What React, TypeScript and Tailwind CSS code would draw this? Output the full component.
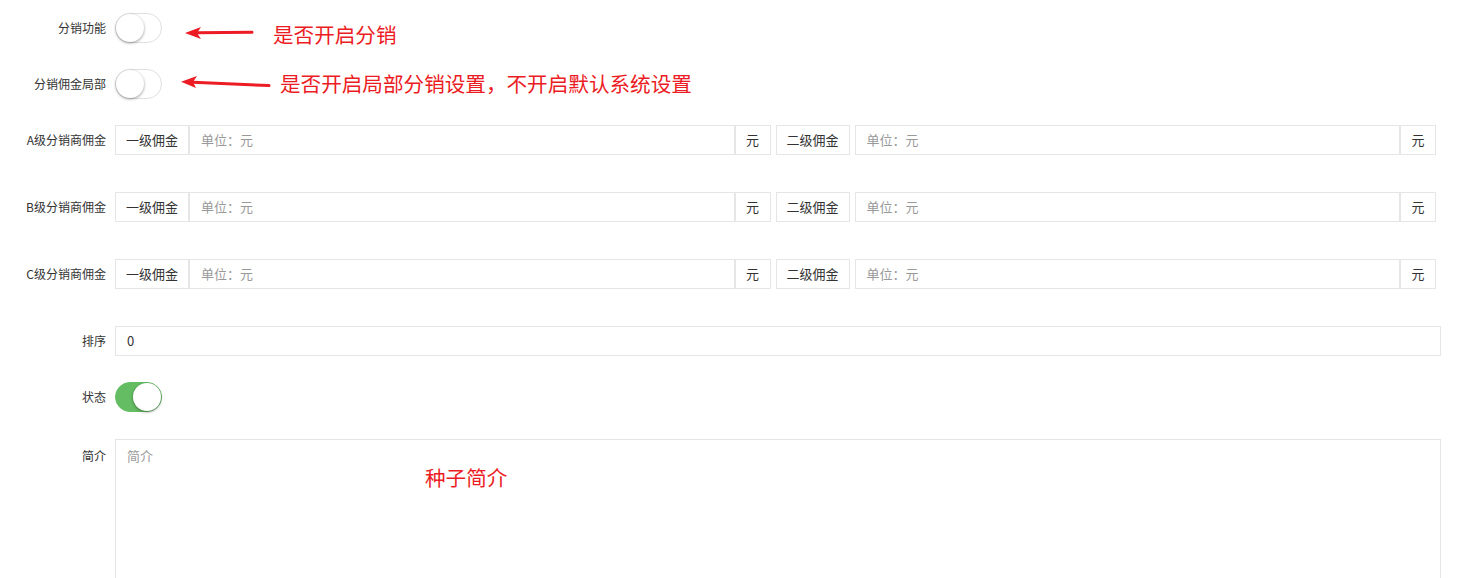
import type { ReactNode } from "react";

const FONT = "font-['Microsoft_YaHei','Noto_Sans_CJK_SC',sans-serif]";

const LEVELS = ["A", "B", "C"];

function Label({ children }: { children: ReactNode }) {
  return (
    <div className="w-[106px] shrink-0 text-right text-[12px] text-[#333]">
      {children}
    </div>
  );
}

function Switch({ on }: { on?: boolean }) {
  return (
    <div
      className={
        on
          ? "flex h-[30px] w-[47px] items-center justify-end rounded-full border border-[#64bd63] bg-[#64bd63]"
          : "flex h-[30px] w-[47px] items-center justify-start rounded-full border border-[#dfdfdf] bg-white"
      }
    >
      <div className="h-[28px] w-[28px] rounded-full bg-white shadow-[0_1px_3px_rgba(0,0,0,0.4)]" />
    </div>
  );
}

function Addon({ children, w }: { children: ReactNode; w: string }) {
  return (
    <div
      className={`${w} flex h-[30px] shrink-0 items-center justify-center border border-[#e6e6e6] bg-white text-[13px] text-[#333]`}
    >
      {children}
    </div>
  );
}

function Field({ placeholder, value }: { placeholder?: string; value?: string }) {
  return (
    <div className="flex h-[30px] min-w-0 flex-1 items-center border border-[#e6e6e6] bg-white px-[11px] text-[13px]">
      {value ? (
        <span className="text-[#333]">{value}</span>
      ) : (
        <span className="text-[#999]">{placeholder}</span>
      )}
    </div>
  );
}

function Arrow({ d, head }: { d: string; head: string }) {
  return (
    <>
      <path d={d} stroke="#ec1c24" strokeWidth="3" strokeLinecap="round" fill="none" />
      <path d={head} fill="#ec1c24" />
    </>
  );
}

export default function App() {
  return (
    <div className={`relative min-h-[578px] w-full bg-white pr-[18px] pt-[13px] ${FONT}`}>
      {/* 分销开关 */}
      <div className="mb-[26px] flex h-[30px] items-center gap-[9px]">
        <Label>分销功能</Label>
        <Switch />
      </div>
      <div className="mb-[26px] flex h-[30px] items-center gap-[9px]">
        <Label>分销佣金局部</Label>
        <Switch />
      </div>

      {/* 佣金 */}
      {LEVELS.map((lv) => (
        <div key={lv} className="mb-[37px] flex h-[30px] items-center gap-[9px]">
          <Label>{lv}级分销商佣金</Label>
          <div className="flex flex-1 items-center pr-[5px]">
            <Addon w="w-[74px]">一级佣金</Addon>
            <Field placeholder="单位：元" />
            <Addon w="w-[36px]">元</Addon>
            <div className="w-[5px]" />
            <Addon w="w-[74px]">二级佣金</Addon>
            <div className="w-[5px]" />
            <Field placeholder="单位：元" />
            <Addon w="w-[36px]">元</Addon>
          </div>
        </div>
      ))}

      <div className="mb-[26px] flex h-[30px] items-center gap-[9px]">
        <Label>排序</Label>
        <Field value="0" />
      </div>

      <div className="mb-[27px] flex h-[30px] items-center gap-[9px]">
        <Label>状态</Label>
        <Switch on />
      </div>

      <div className="flex items-start gap-[9px]">
        <div className="pt-[8px]">
          <Label>简介</Label>
        </div>
        <div className="h-[160px] flex-1 border border-[#e6e6e6] px-[11px] py-[6px] text-[13px] leading-[20px] text-[#999]">
          简介
        </div>
      </div>

      {/* 标注 */}
      <svg
        className="pointer-events-none absolute left-0 top-0"
        width="300"
        height="100"
        viewBox="0 0 300 100"
      >
        <Arrow d="M197 32.8 L252 32.2" head="M185 33 L201 27 L197 33 L201 39 Z" />
        <Arrow d="M193 82.2 L269 85.6" head="M181 81.7 L197 76 L193 82 L196 88 Z" />
      </svg>
      <div className="pointer-events-none absolute left-[273px] top-[24px] text-[20.6px] leading-none text-[#ec1c24]">
        是否开启分销
      </div>
      <div className="pointer-events-none absolute left-[280px] top-[73px] text-[20.6px] leading-none text-[#ec1c24]">
        是否开启局部分销设置，不开启默认系统设置
      </div>
      <div className="pointer-events-none absolute left-[425px] top-[467px] text-[20.6px] leading-none text-[#ec1c24]">
        种子简介
      </div>
    </div>
  );
}
